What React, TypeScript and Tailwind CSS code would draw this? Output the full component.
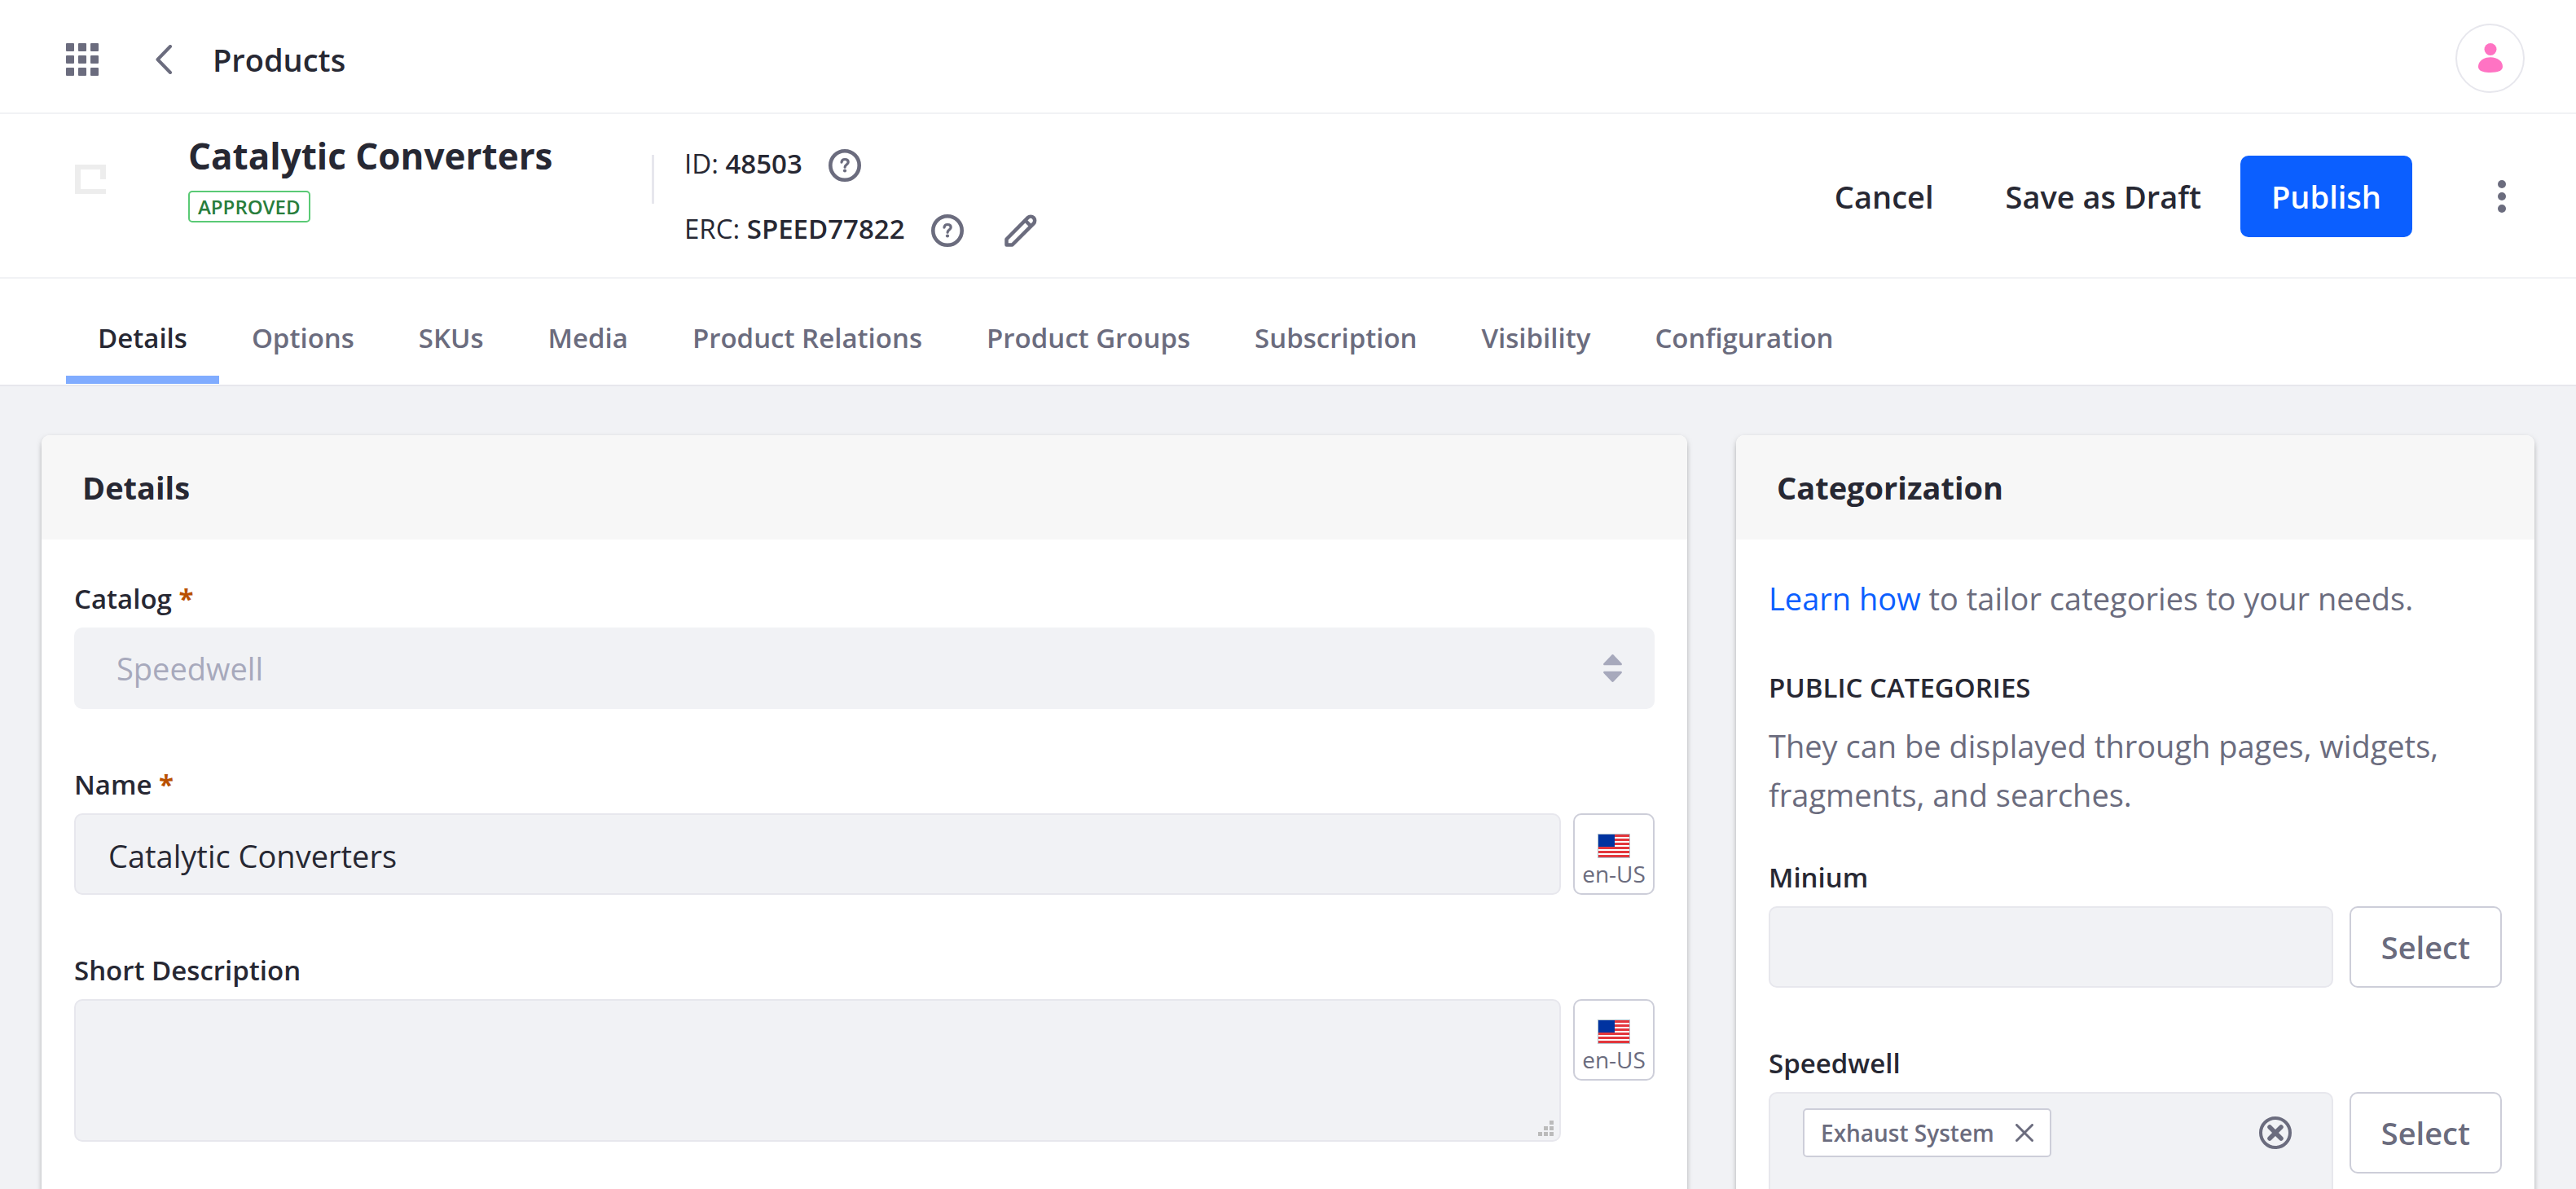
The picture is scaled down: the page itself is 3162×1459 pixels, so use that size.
import type { ReactNode } from 'react';

const tabs = [
  'Details',
  'Options',
  'SKUs',
  'Media',
  'Product Relations',
  'Product Groups',
  'Subscription',
  'Visibility',
  'Configuration',
];

function AppsIcon() {
  const steps = [0, 15, 30];
  return (
    <svg width="40" height="40" viewBox="0 0 40 40" fill="#6b6c7e" aria-hidden="true">
      {steps.flatMap((y) => steps.map((x) => <rect key={`${x}-${y}`} x={x} y={y} width="10" height="10" rx="1" />))}
    </svg>
  );
}

function BackIcon() {
  return (
    <svg width="20" height="36" viewBox="0 0 20 36" fill="none" stroke="#6b6c7e" strokeWidth="4" strokeLinecap="round" strokeLinejoin="round" aria-hidden="true">
      <path d="M18 2 2.5 18 18 34" />
    </svg>
  );
}

function UserIcon() {
  return (
    <svg width="30" height="36" viewBox="0 0 30 36" fill="#ff73c3" aria-hidden="true">
      <circle cx="15" cy="7.5" r="7.5" />
      <path d="M15 17.3C6 17.3 0 22.5 0 28.8 0 34 6 36 15 36s15-2 15-7.2C30 22.5 24 17.3 15 17.3z" />
    </svg>
  );
}

function PlaceholderIcon() {
  return (
    <svg width="38" height="36" viewBox="0 0 38 36" fill="#ededed" aria-hidden="true">
      <path d="M0 0h38v18h-7V6H7v24h31v6H0z" />
    </svg>
  );
}

function HelpIcon() {
  return (
    <svg width="40" height="40" viewBox="0 0 40 40" fill="none" stroke="#6b6c7e" aria-hidden="true">
      <circle cx="20" cy="20" r="17.7" strokeWidth="4.6" />
      <path d="M16 16.2c.2-2.4 1.800-3.7 4.100-3.7 2.500 0 4.100 1.400 4.100 3.500 0 3-4.100 3.200-4.100 6.200" strokeWidth="3.2" strokeLinecap="round" />
      <circle cx="20" cy="26.500" r="2.1" fill="#6b6c7e" stroke="none" />
    </svg>
  );
}

function PencilIcon() {
  return (
    <svg width="40" height="40" viewBox="0 0 40 40" fill="none" stroke="#6b6c7e" strokeWidth="4.5" strokeLinejoin="round" aria-hidden="true">
      <path d="M2.5 37.5v-7L28.6 4.2a4.9 4.9 0 0 1 7.1 7.1L9.5 37.5z" />
      <path d="m25.5 7.5 7 7" />
    </svg>
  );
}

function MoreIcon() {
  return (
    <svg width="10" height="40" viewBox="0 0 10 40" fill="#6b6c7e" aria-hidden="true">
      <circle cx="5" cy="5" r="5" />
      <circle cx="5" cy="20" r="5" />
      <circle cx="5" cy="35" r="5" />
    </svg>
  );
}

function SortIcon() {
  return (
    <svg className="pointer-events-none absolute top-[33px] right-10" width="23" height="34" viewBox="0 0 23 34" fill="#a7a9bc" aria-hidden="true">
      <path d="M10.5.5a1.4 1.4 0 0 1 2 0l10 10.5c.9 1 .3 2.3-1 2.3h-20c-1.3 0-1.9-1.3-1-2.3z" />
      <path d="M10.5 33.5a1.4 1.4 0 0 0 2 0l10-10.5c.9-1 .3-2.3-1-2.3h-20c-1.3 0-1.9 1.3-1 2.3z" />
    </svg>
  );
}

function FlagIcon() {
  return (
    <svg width="40" height="30" viewBox="0 0 40 30" aria-hidden="true">
      <rect width="40" height="30" fill="#b4c5cf" />
      <rect x="1" y="1" width="38" height="28" fill="#fff" />
      {[1, 6, 11, 16, 21, 26].map((y) => (
        <rect key={y} x="1" y={y} width="38" height="3" fill="#e3363c" />
      ))}
      <rect x="1" y="1" width="20" height="15" fill="#0033a0" />
    </svg>
  );
}

function GripIcon() {
  return (
    <svg className="pointer-events-none absolute right-[9px] bottom-[7px]" width="19" height="19" viewBox="0 0 19 19" fill="#bbbbbb" aria-hidden="true">
      <path d="M14 0h5v5h-5zM7 7h5v5H7zM14 7h5v5h-5zM0 14h5v5H0zM7 14h5v5H7zM14 14h5v5h-5z" />
    </svg>
  );
}

function CloseIcon() {
  return (
    <svg width="22" height="22" viewBox="0 0 22 22" fill="none" stroke="#6b6c7e" strokeWidth="3" strokeLinecap="round" aria-hidden="true">
      <path d="m1.5 1.5 19 19M20.5 1.5l-19 19" />
    </svg>
  );
}

function ClearIcon() {
  return (
    <svg width="40" height="40" viewBox="0 0 40 40" fill="none" stroke="#6b6c7e" strokeLinecap="round" aria-hidden="true">
      <circle cx="20" cy="20" r="18" strokeWidth="4" />
      <path d="m13 13 14 14M27 13 13 27" strokeWidth="5.5" />
    </svg>
  );
}

function Required() {
  return <span className="font-bold text-[#b95000]"> *</span>;
}

function Label({ htmlFor, children }: { htmlFor: string; children: ReactNode }) {
  return (
    <label htmlFor={htmlFor} className="mb-[5px] block text-[33px] leading-[60px] font-semibold">
      {children}
    </label>
  );
}

function LocaleButton() {
  return (
    <button type="button" className="flex size-[100px] shrink-0 flex-col items-center rounded-[10px] border-2 border-[#cdced9] bg-white pt-[23px] text-[#6b6c7e]">
      <FlagIcon />
      <span className="mt-[5px] text-[28px] leading-7">en-US</span>
    </button>
  );
}

function SelectButton() {
  return (
    <button type="button" className="h-[100px] shrink-0 rounded-[10px] border-2 border-[#cdced9] bg-white px-[37px] text-[38px] leading-[60px] font-semibold text-[#6b6c7e]">
      Select
    </button>
  );
}

function Card({ title, children }: { title: string; children: ReactNode }) {
  return (
    <section className="rounded-[10px] bg-white shadow-[0_3px_8px_-3px_rgba(0,0,0,0.6)]">
      <h2 className="rounded-t-[10px] bg-[#f7f7f7] px-[50px] py-[34px] text-[38px] leading-[60px] font-bold">{title}</h2>
      {children}
    </section>
  );
}

export default function App() {
  return (
    <div className="flex h-screen flex-col overflow-hidden bg-[#f1f2f5] font-['Open_Sans',sans-serif] text-[#272833]">
      <header className="flex h-[140px] shrink-0 items-center border-b-2 border-[#f1f2f5] bg-white pt-2 pr-[63px] pl-[81px]">
        <button type="button" aria-label="Applications">
          <AppsIcon />
        </button>
        <a href="#products" aria-label="Back" className="ml-[70px]">
          <BackIcon />
        </a>
        <span className="ml-[50px] text-[38px] leading-[60px] font-semibold">Products</span>
        <button type="button" aria-label="User profile" className="mb-1 ml-auto flex size-[85px] items-center justify-center rounded-full border-2 border-[#e7e7ed] bg-white">
          <UserIcon />
        </button>
      </header>

      <div className="flex h-[202px] shrink-0 items-center justify-between border-b-2 border-[#f1f2f5] bg-white pr-[51px] pl-[92px]">
        <div className="flex self-start pt-[21px]">
          <div className="mt-[41px] mr-[101px]">
            <PlaceholderIcon />
          </div>
          <div className="w-[569px]">
            <h1 className="text-[44px] leading-[60px] font-bold">Catalytic Converters</h1>
            <span className="mt-[13px] inline-flex h-[39px] items-center rounded-[5px] border-2 border-[#5aca75] px-[10px] text-2xl font-semibold text-[#287d3c]">
              APPROVED
            </span>
          </div>
          <div className="mt-[29px] h-[60px] w-[3px] bg-[#e7e7ed]" />
          <div className="ml-[37px] text-[33px] leading-[60px]">
            <div className="flex h-20 items-center">
              <span>
                ID: <strong className="font-semibold">48503</strong>
              </span>
              <button type="button" aria-label="About the ID" className="mt-1 ml-8">
                <HelpIcon />
              </button>
            </div>
            <div className="flex h-20 items-center">
              <span>
                ERC: <strong className="font-semibold">SPEED77822</strong>
              </span>
              <button type="button" aria-label="About the ERC" className="mt-1 ml-8">
                <HelpIcon />
              </button>
              <button type="button" aria-label="Edit the ERC" className="mt-1 ml-[50px]">
                <PencilIcon />
              </button>
            </div>
          </div>
        </div>
        <div className="flex items-center pt-0.5 text-[38px] leading-[60px] font-semibold">
          <button type="button" className="mr-2 h-[100px] px-10">
            Cancel
          </button>
          <button type="button" className="mr-2 h-[100px] px-10">
            Save as Draft
          </button>
          <button type="button" className="h-[100px] rounded-[10px] bg-[#0b5fff] px-[38px] text-white">
            Publish
          </button>
          <button type="button" aria-label="More actions" className="ml-[70px] flex h-[100px] w-20 items-center justify-center">
            <MoreIcon />
          </button>
        </div>
      </div>

      <nav className="flex shrink-0 gap-px border-b-2 border-[#e7e7ed] bg-white pb-px pl-[81px] text-[33px] leading-[60px] font-semibold">
        {tabs.map((tab, index) => (
          <a
            key={tab}
            href={`#${tab}`}
            className={
              index === 0
                ? 'border-b-[10px] border-[#80acff] px-[39px] pt-[43px] pb-4'
                : 'border-b-[10px] border-transparent px-[39px] pt-[43px] pb-4 text-[#6b6c7e]'
            }
          >
            {tab}
          </a>
        ))}
      </nav>

      <main className="grid min-h-0 flex-1 grid-cols-[101fr_49fr] gap-[60px] overflow-hidden px-[51px] pt-[60px]">
        <Card title="Details">
          <div className="flex flex-col gap-[63px] px-10 pt-[43px] pb-16">
            <div>
              <Label htmlFor="catalog">
                Catalog
                <Required />
              </Label>
              <div className="relative">
                <select id="catalog" disabled className="block h-[100px] w-full appearance-none rounded-[10px] bg-[#f1f2f5] px-[52px] text-[38px] text-[#a7a9bc] opacity-100">
                  <option>Speedwell</option>
                </select>
                <SortIcon />
              </div>
            </div>
            <div>
              <Label htmlFor="name">
                Name
                <Required />
              </Label>
              <div className="flex gap-[15px]">
                <input id="name" type="text" defaultValue="Catalytic Converters" className="h-[100px] min-w-0 flex-1 rounded-[10px] border-2 border-[#e7e7ed] bg-[#f1f2f5] px-10 pt-1 text-[38px]" />
                <LocaleButton />
              </div>
            </div>
            <div>
              <Label htmlFor="short-description">Short Description</Label>
              <div className="flex items-start gap-[15px]">
                <div className="relative flex-1">
                  <textarea id="short-description" className="block h-[175px] w-full resize-none rounded-[10px] border-2 border-[#e7e7ed] bg-[#f1f2f5] px-10 py-4 text-[38px]" />
                  <GripIcon />
                </div>
                <LocaleButton />
              </div>
            </div>
          </div>
        </Card>

        <Card title="Categorization">
          <div className="px-10 pt-[42px] pb-16">
            <p className="text-[38px] leading-[60px] text-[#6b6c7e]">
              <a href="#learn" className="text-[#0b5fff]">
                Learn how
              </a>{' '}
              to tailor categories to your needs.
            </p>
            <h3 className="mt-[50px] text-[33px] leading-[60px] font-semibold">PUBLIC CATEGORIES</h3>
            <p className="mt-[11px] text-[38px] leading-[60px] text-[#6b6c7e]">
              They can be displayed through pages, widgets, fragments, and searches.
            </p>
            <div className="mt-[42px] flex flex-col gap-[63px]">
              <div>
                <Label htmlFor="minium">Minium</Label>
                <div className="flex gap-5">
                  <input id="minium" type="text" className="h-[100px] min-w-0 flex-1 rounded-[10px] border-2 border-[#e7e7ed] bg-[#f1f2f5] px-10 text-[38px]" />
                  <SelectButton />
                </div>
              </div>
              <div>
                <Label htmlFor="speedwell">Speedwell</Label>
                <div className="flex items-start gap-5">
                  <div className="flex min-w-0 flex-1 items-start rounded-[10px] border-2 border-[#e7e7ed] bg-[#f1f2f5] py-[18px] pr-[49px] pl-10">
                    <div className="flex min-w-0 flex-1 flex-col">
                      <span className="flex h-[60px] items-center self-start rounded-[5px] border-2 border-[#cdced9] bg-white px-5 text-[28px] font-semibold text-[#6b6c7e]">
                        Exhaust System
                        <button type="button" aria-label="Remove Exhaust System" className="ml-[26px]">
                          <CloseIcon />
                        </button>
                      </span>
                      <input id="speedwell" type="text" className="h-[60px] w-full bg-transparent text-[38px]" />
                    </div>
                    <button type="button" aria-label="Clear all" className="mt-[10px]">
                      <ClearIcon />
                    </button>
                  </div>
                  <SelectButton />
                </div>
              </div>
            </div>
          </div>
        </Card>
      </main>
    </div>
  );
}
